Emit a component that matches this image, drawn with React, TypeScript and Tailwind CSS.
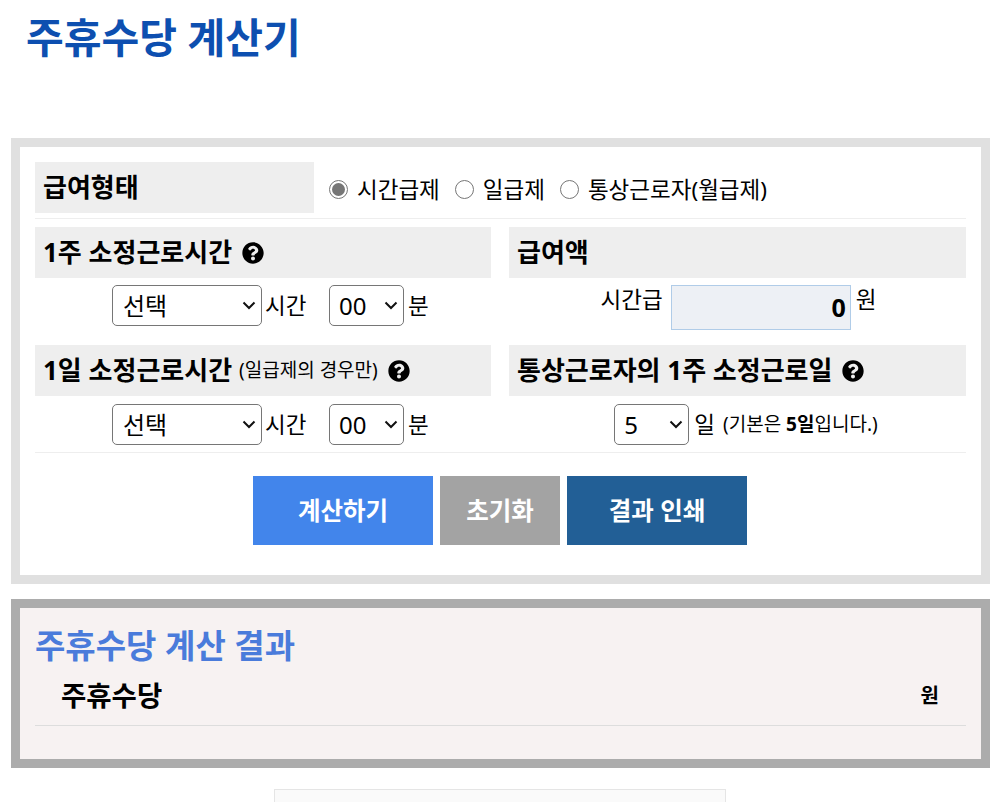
import React from "react";
import { FaQuestionCircle } from "react-icons/fa";

const font = "font-['Noto_Sans','Noto_Sans_CJK_KR',sans-serif]";

const Heading = ({ children }: { children: React.ReactNode }) => (
  <div className="flex h-[51px] items-center bg-[#eeeeee] pl-2 text-[26px] font-bold text-black whitespace-nowrap">
    {children}
  </div>
);

const Help = () => (
  <FaQuestionCircle className="ml-[10px] text-[22px] text-black" />
);

const Select = ({ width, pad, options }: { width: string; pad: string; options: string[] }) => (
  <div className={`relative ${width} h-[41px]`}>
    <select className={`h-full w-full appearance-none rounded-[5px] border border-[#767676] bg-white ${pad} text-[24px] text-black`}>
      {options.map((o) => (
        <option key={o}>{o}</option>
      ))}
    </select>
    <svg
      viewBox="0 0 14 9"
      className="pointer-events-none absolute right-[6px] top-[16px] h-[9px] w-[14px]"
      fill="none"
      stroke="#111111"
      strokeWidth="2"
    >
      <path d="M1.5 1.5 7 7l5.5-5.5" />
    </svg>
  </div>
);

const Radio = ({ label, checked }: { label: string; checked?: boolean }) => (
  <label className="mr-[15px] flex items-center">
    <span className="mr-[9px] flex h-[19px] w-[19px] items-center justify-center rounded-full border border-[#767676] bg-white">
      {checked && <span className="h-[13px] w-[13px] rounded-full bg-[#767676]" />}
    </span>
    <span className="text-[22.5px] text-black">{label}</span>
  </label>
);

const TimeInputs = () => (
  <div className="flex h-[41px] items-center justify-center pl-[14px] text-[22.5px] text-black">
    <Select width="w-[150px]" pad="pl-[10px]" options={["선택"]} />
    <span className="ml-[3px] w-[64px]">시간</span>
    <Select width="w-[75px]" pad="pl-[9px]" options={["00"]} />
    <span className="ml-[4px] w-[20px]">분</span>
  </div>
);

export default function App() {
  return (
    <div className={`${font} h-[802px] overflow-hidden bg-white`}>
      <h1 className="h-[138px] pl-[26px] pt-[8px] text-[41px] leading-[58px] font-bold text-[#0d4fb0]">
        주휴수당 계산기
      </h1>

      <div className="mx-[11px] h-[446px] w-[979px] border-[9px] border-[#e0e0e0] bg-white px-[15px] pt-[15px]">
        <div className="flex border-b border-[#eeeeee] pb-[5px]">
          <div className="w-[279px]">
            <Heading>급여형태</Heading>
          </div>
          <div className="ml-[15px] flex items-center pt-[4px]">
            <Radio label="시간급제" checked />
            <Radio label="일급제" />
            <Radio label="통상근로자(월급제)" />
          </div>
        </div>

        <div className="mt-[8px] grid grid-cols-[456px_457px] gap-x-[18px]">
          <div>
            <Heading>
              1주 소정근로시간
              <Help />
            </Heading>
            <div className="mt-[7px]">
              <TimeInputs />
            </div>
          </div>
          <div>
            <Heading>급여액</Heading>
            <div className="mt-[7px] flex justify-center pl-[2px] text-[22.5px] text-black">
              <span className="mr-[8px] leading-[30px]">시간급</span>
              <div className="flex h-[45px] w-[180px] items-center justify-end border border-[#b0cce8] bg-[#edf0f5] pr-[4px] pt-[1px] text-[25px] font-bold">
                0
              </div>
              <span className="ml-[5px] leading-[30px]">원</span>
            </div>
          </div>

          <div className="mt-[15px]">
            <Heading>
              1일 소정근로시간
              <span className="ml-[7px] text-[19px] font-normal">(일급제의 경우만)</span>
              <Help />
            </Heading>
            <div className="mt-[8px]">
              <TimeInputs />
            </div>
          </div>
          <div className="mt-[15px]">
            <Heading>
              통상근로자의 1주 소정근로일
              <Help />
            </Heading>
            <div className="mt-[8px] flex h-[41px] items-center justify-center pl-[17px] text-[22.5px] text-black">
              <Select width="w-[75px]" pad="pl-[9px]" options={["5"]} />
              <span className="ml-[5px]">일</span>
              <span className="ml-[8px] text-[19px]">
                (기본은 <b>5일</b>입니다.)
              </span>
            </div>
          </div>
        </div>

        <div className="mt-[7px] flex justify-center gap-[7px] border-t border-[#eeeeee] pt-[23px] pr-[1px]">
          <button className="h-[69px] w-[180px] bg-[#4285eb] pt-[2px] text-[24.5px] font-bold text-white">
            계산하기
          </button>
          <button className="h-[69px] w-[120px] bg-[#a3a3a3] pt-[2px] text-[24.5px] font-bold text-white">
            초기화
          </button>
          <button className="h-[69px] w-[180px] bg-[#225f96] pt-[2px] text-[24.5px] font-bold text-white">
            결과 인쇄
          </button>
        </div>
      </div>

      <div className="mx-[11px] mt-[15px] h-[169px] w-[979px] border-[9px] border-[#acacac] bg-[#f7f2f2] px-[15px]">
        <h2 className="pt-[17px] text-[33px] leading-[42px] font-bold text-[#4a7bdb]">
          주휴수당 계산 결과
        </h2>
        <div className="flex h-[59px] items-center justify-between border-b border-[#dddddd] pl-[26px] pr-[27px] font-bold text-black">
          <span className="text-[27.5px]">주휴수당</span>
          <span className="text-[20px]">원</span>
        </div>
      </div>

      <div className="mx-auto mt-[21px] h-[20px] w-[452px] -translate-x-[4px] border border-[#e5e5e5] bg-[#fafafa]" />
    </div>
  );
}
